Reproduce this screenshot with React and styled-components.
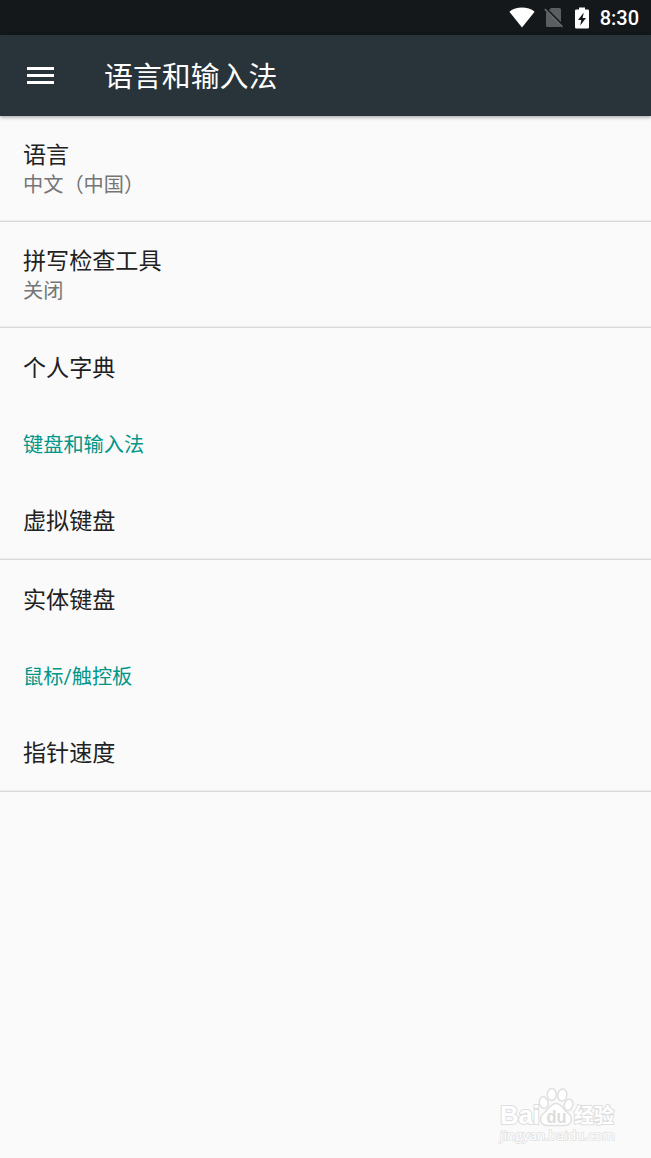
import React from 'react';
import styled, { createGlobalStyle } from 'styled-components';

const App = () => {
  return (
    <>
      <GlobalStyle />
      <Screen>
        <StatusBar>
          <Icons>
            <WifiIcon />
            <NoSimIcon />
            <BatteryIcon />
          </Icons>
          <Clock>8:30</Clock>
        </StatusBar>
        <Toolbar>
          <MenuButton aria-label="menu">
            <MenuLine />
            <MenuLine />
            <MenuLine />
          </MenuButton>
          <Title>语言和输入法</Title>
        </Toolbar>
        <List>
          <Item $tall $divider>
            <Name>语言</Name>
            <Summary>中文（中国）</Summary>
          </Item>
          <Item $tall $divider>
            <Name>拼写检查工具</Name>
            <Summary>关闭</Summary>
          </Item>
          <Item>
            <Name>个人字典</Name>
          </Item>
          <Category>键盘和输入法</Category>
          <Item $divider>
            <Name>虚拟键盘</Name>
          </Item>
          <Item>
            <Name>实体键盘</Name>
          </Item>
          <Category>鼠标/触控板</Category>
          <Item $divider>
            <Name>指针速度</Name>
          </Item>
        </List>
        <Footer>
          <Watermark />
        </Footer>
      </Screen>
    </>
  )
}

const WifiIcon = () => (
  <svg width="26" height="21" viewBox="0 0 26 21">
    <path d="M13 20.5 L0.4 4.7 C7 -0.9 19 -0.9 25.6 4.7 Z" fill="#fff" />
  </svg>
)

const NoSimIcon = () => (
  <svg width="20" height="21" viewBox="0 0 20 21">
    <path d="M7 1 H15.5 Q17 1 17 2.5 V18.5 Q17 20 15.5 20 H3.5 Q2 20 2 18.5 V6 Z" fill="#5b5e60" />
    <path d="M1.6 1.2 L19.2 18.8" stroke="#14181b" strokeWidth="2.2" />
    <path d="M0.8 2.2 L18.4 19.8" stroke="#65686a" strokeWidth="1.8" />
  </svg>
)

const BatteryIcon = () => (
  <svg width="14" height="22" viewBox="0 0 14 22">
    <path d="M4 0.5 H10 V2.5 H12.8 Q14 2.5 14 3.7 V20.3 Q14 21.5 12.8 21.5 H1.2 Q0 21.5 0 20.3 V3.7 Q0 2.5 1.2 2.5 H4 Z" fill="#fff" />
    <path d="M8.8 5.5 L3 13 H6.3 L5.2 18.5 L11 10.9 H7.6 Z" fill="#14181b" />
  </svg>
)

const Watermark = () => (
  <svg width="124" height="60" viewBox="0 0 124 60">
    <g fill="#fff" stroke="#e0e0e0" strokeWidth="1.5">
      <ellipse cx="48.7" cy="17.5" rx="4.4" ry="5.8" transform="rotate(-12 48.7 17.5)" />
      <ellipse cx="56.8" cy="9.5" rx="4.5" ry="6.1" />
      <ellipse cx="67.3" cy="10" rx="4.5" ry="6.1" transform="rotate(10 67.3 10)" />
      <ellipse cx="73.5" cy="19.8" rx="4.3" ry="5.8" transform="rotate(15 73.5 19.8)" />
      <path d="M61 18.5 C55.5 18.5 53.5 24.5 49 28 C43 32.5 45 40.5 52.5 40.5 H69.5 C77 40.5 78.5 32.5 73 28 C67.5 23.5 66.5 18.5 61 18.5 Z" />
    </g>
    <WatermarkText x="5" y="39" fontSize="25.5" textLength="40" lengthAdjust="spacingAndGlyphs">Bai</WatermarkText>
    <InkText x="51.5" y="37.5" textLength="20" lengthAdjust="spacingAndGlyphs">du</InkText>
    <WatermarkText x="79" y="38" fontSize="20" textLength="40" lengthAdjust="spacingAndGlyphs">经验</WatermarkText>
    <AddressText x="5" y="55" textLength="115">jingyan.baidu.com</AddressText>
  </svg>
)

export default App;

const GlobalStyle = createGlobalStyle`
  body {
    margin: 0;
    background: #fafafa;
    font-family: Roboto, 'Noto Sans CJK SC', sans-serif;
  }
`
const Screen = styled.div`
  min-height: 1158px;
  display: flex;
  flex-direction: column;
  background: #fafafa;
`
const StatusBar = styled.div`
  height: 35px;
  padding-right: 12px;
  box-sizing: border-box;
  display: flex;
  justify-content: flex-end;
  align-items: center;
  gap: 11px;
  background: #14181b;
`
const Icons = styled.div`
  display: flex;
  align-items: center;
  gap: 9px;

  svg:last-child {
    margin-left: 2px;
  }
`
const Clock = styled.div`
  font-family: Roboto, sans-serif;
  font-size: 20px;
  font-weight: 500;
  line-height: 35px;
  padding-top: 2px;
  color: #fff;
`
const Toolbar = styled.div`
  height: 81px;
  padding-left: 27px;
  display: flex;
  align-items: center;
  background: #29343a;
  box-shadow: 0 1px 4px rgba(0, 0, 0, 0.4);
`
const MenuButton = styled.button`
  width: 27px;
  padding: 0;
  border: none;
  background: transparent;
  display: flex;
  flex-direction: column;
  gap: 4px;
  cursor: pointer;
`
const MenuLine = styled.span`
  height: 3px;
  background: #fff;
`
const Title = styled.div`
  margin-left: 50px;
  padding-top: 2px;
  font-size: 28.9px;
  line-height: 40px;
  color: #fff;
`
const List = styled.div`
  display: flex;
  flex-direction: column;
`
const Item = styled.div`
  height: ${props => props.$tall ? '106px' : '78px'};
  padding: ${props => props.$divider ? '2px 23px 0' : '3px 23px 0'};
  box-sizing: border-box;
  display: flex;
  flex-direction: column;
  justify-content: center;
  border-bottom: ${props => props.$divider ? '1px solid #d8d8d8' : 'none'};
  box-shadow: ${props => props.$divider ? 'inset 0 -1px #ededed' : 'none'};
`
const Name = styled.div`
  font-size: 23.1px;
  line-height: 30px;
  color: #212121;
`
const Summary = styled.div`
  font-size: 20.2px;
  line-height: 28px;
  color: #757575;
`
const Category = styled.div`
  height: 76px;
  padding: 1px 23px 0;
  box-sizing: border-box;
  font-size: 20.2px;
  line-height: 76px;
  color: #009688;
`
const Footer = styled.div`
  margin-top: auto;
  padding: 0 32px 13px 0;
  display: flex;
  justify-content: flex-end;
`
const WatermarkText = styled.text`
  font-family: 'Liberation Sans', 'Noto Sans CJK SC', sans-serif;
  font-weight: 700;
  fill: #fff;
  stroke: #dedede;
  stroke-width: 2px;
  paint-order: stroke;
`
const InkText = styled.text`
  font-family: 'Liberation Sans', sans-serif;
  font-size: 18px;
  font-weight: 700;
  fill: #dcdcdc;
`
const AddressText = styled.text`
  font-family: 'Open Sans', sans-serif;
  font-size: 13.5px;
  fill: #fff;
  stroke: #e2e2e2;
  stroke-width: 1.6px;
  paint-order: stroke;
`
